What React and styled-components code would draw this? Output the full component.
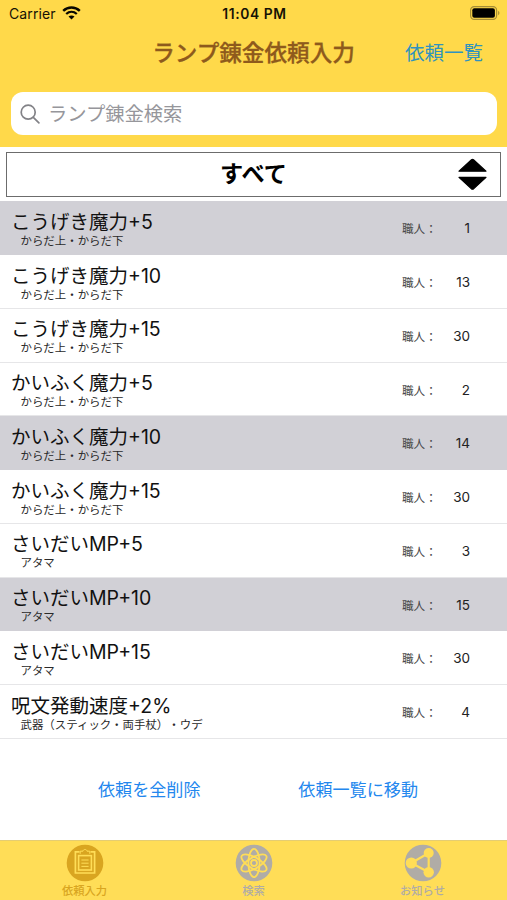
import React, { useState } from "react";
import styled, { createGlobalStyle } from "styled-components";

const GlobalStyle = createGlobalStyle`
  body {
    margin: 0;
    background: #fff;
    font-family: Inter, "Noto Sans CJK JP", sans-serif;
    color: #111;
    text-spacing-trim: space-all;
  }

  * {
    box-sizing: border-box;
  }
`;

const Screen = styled.div`
  width: 507px;
  height: 900px;
  display: flex;
  flex-direction: column;
  overflow: hidden;
  background: #fff;
`;

//Header
const Header = styled.header`
  height: 147px;
  flex: none;
  background: #ffd94a;
`;

const StatusBar = styled.div`
  height: 27px;
  padding: 0 7px 0 9px;
  display: grid;
  grid-template-columns: 1fr auto 1fr;
  align-items: center;
  font-size: 14px;
  line-height: 27px;
  color: #151205;
`;

const Carrier = styled.div`
  display: flex;
  align-items: center;
  gap: 6px;
  letter-spacing: 0.1px;

  svg {
    margin-top: -2px;
  }
`;

const Clock = styled.div`
  padding-top: 1px;
  font-size: 13.8px;
  line-height: 26px;
  font-weight: 600;
  letter-spacing: 0.6px;
`;

const BatteryWrapper = styled.div`
  display: flex;
  justify-content: flex-end;

  svg {
    margin-top: -2px;
  }
`;

const NavBar = styled.div`
  height: 52px;
  padding: 0 24px;
  display: grid;
  grid-template-columns: 1fr auto 1fr;
  align-items: center;
`;

const Title = styled.h1`
  grid-column: 2;
  margin: 0;
  color: #8e5a1c;
  font-size: 22.6px;
  line-height: 30px;
  font-weight: 500;
  -webkit-text-stroke: 0.3px #8e5a1c;
`;

const NavLink = styled.button`
  padding: 0;
  border: none;
  background: none;
  color: #2f93bf;
  font-family: inherit;
  font-size: 19.5px;
  line-height: 30px;
  text-align: right;
`;

const SearchBox = styled.label`
  height: 43px;
  margin: 13px 10px 0 11px;
  padding: 0 9px;
  display: flex;
  align-items: center;
  gap: 8px;
  border-radius: 12px;
  background: #fff;
`;

const SearchInput = styled.input`
  flex: 1;
  height: 30px;
  padding: 0;
  border: none;
  outline: none;
  font-family: inherit;
  font-size: 19.3px;

  &::placeholder {
    color: #96969b;
  }
`;

//Filter
const Filter = styled.button`
  height: 45px;
  flex: none;
  margin: 5px 6px 4.4px;
  padding: 0 13px;
  display: grid;
  grid-template-columns: 1fr auto 1fr;
  align-items: center;
  border: 1px solid #6c6c6c;
  background: #fff;
  color: #000;
  font-family: inherit;
  font-size: 23.2px;
  line-height: 32px;
  font-weight: 700;

  span {
    grid-column: 2;
    padding-bottom: 1px;
  }

  svg {
    justify-self: end;
  }
`;

//List
const List = styled.ul`
  margin: 0;
  padding: 0;
  flex: none;
  list-style: none;
`;

const Row = styled.li`
  height: 53.75px;
  padding: 1px 37px 0 11px;
  display: flex;
  align-items: center;
  border-bottom: 1px solid ${(p) => (p.$selected ? "#d1d0d6" : "#e6e6e8")};
  background: ${(p) => (p.$selected ? "#d1d0d6" : "#fff")};
`;

const RowText = styled.div`
  flex: 1;
  padding-top: 2px;
`;

const RowTitle = styled.div`
  font-size: 19.5px;
  line-height: 24px;
  white-space: nowrap;
`;

const RowParts = styled.div`
  padding-left: 9.5px;
  font-size: 11.45px;
  line-height: 15px;
  color: #2a2a2a;
`;

const Label = styled.div`
  width: 44px;
  font-size: 11.6px;
  color: #484848;
`;

const Count = styled.div`
  width: 24px;
  font-size: 13.5px;
  text-align: right;
  color: #222;
`;

//Footer
const Actions = styled.div`
  flex: 1;
  padding: 2px 89px 0 98px;
  display: flex;
  align-items: center;
  justify-content: space-between;
`;

const ActionBtn = styled.button`
  padding: 0;
  border: none;
  background: none;
  color: #2387ee;
  font-family: inherit;
  font-size: 17.1px;
  line-height: 26px;
`;

const TabBar = styled.nav`
  height: 60px;
  flex: none;
  display: grid;
  grid-template-columns: repeat(3, 1fr);
  border-top: 1px solid #e5cd72;
  background: #ffdd57;
`;

const Tab = styled.button`
  padding: 3px 0 0;
  display: flex;
  flex-direction: column;
  align-items: center;
  gap: 1px;
  border: none;
  background: none;
  color: ${(p) => (p.$active ? "#d9a520" : "#b0aca6")};
  font-family: inherit;
  font-size: 11.3px;
  line-height: 17px;
  font-weight: 500;
`;

const TAB_BG = "#ffdd57";

const WifiIcon = () => (
  <svg width="19" height="14" viewBox="0 0 19 14" fill="none" stroke="#080700">
    <path d="M1.2 4.8C6 .4 13 .4 17.8 4.8" strokeWidth="2.5" />
    <path d="M4.2 8C7.3 5.2 11.7 5.2 14.8 8" strokeWidth="2.3" />
    <path d="M6.5 10.5C8.2 9 10.8 9 12.5 10.5L9.5 13.5Z" fill="#080700" stroke="none" />
  </svg>
);

const BatteryIcon = () => (
  <svg width="30" height="14" viewBox="0 0 30 14">
    <rect x=".6" y=".6" width="26" height="12.8" rx="3.6" fill="none" stroke="#a58d35" strokeWidth="1.2" />
    <rect x="2.3" y="2.3" width="22.6" height="9.4" rx="2" fill="#000" />
    <path d="M28.1 4.8c1.8.8 1.8 3.6 0 4.4z" fill="#a58d35" />
  </svg>
);

const SearchIcon = () => (
  <svg width="20" height="20" viewBox="0 0 20 20" fill="none" stroke="#828287" strokeWidth="1.7" strokeLinecap="round">
    <circle cx="8.2" cy="8.2" r="7" />
    <path d="M13.3 13.3L18.9 18.8" />
  </svg>
);

const SortIcon = () => (
  <svg width="29" height="33" viewBox="0 0 29 33" stroke="#000" strokeWidth="1.2" strokeLinejoin="round">
    <path d="M1 13.2L13.5 1.7Q14.5 1 15.5 1.7L28 13.2Z" />
    <path d="M1 19.4L13.5 30.9Q14.5 31.6 15.5 30.9L28 19.4Z" />
  </svg>
);

const ClipboardIcon = () => (
  <svg width="38" height="38" viewBox="0 0 38 38">
    <circle cx="19" cy="19" r="18.3" fill="currentColor" />
    <g fill="none" stroke={TAB_BG}>
      <path d="M13.5 7.9H9.4V29H28.6V7.9H24.5" strokeWidth="1.7" />
      <path d="M14.2 9.8V7.2H17C17 5 21 5 21 7.2H23.8V9.8" strokeWidth="1" />
      <rect x="12.6" y="11.6" width="12.8" height="14.4" strokeWidth="1.6" />
      <path d="M15.4 16H22.6M15.4 19.2H22.6M15.4 22.4H22.6" strokeWidth="1" />
    </g>
  </svg>
);

const AtomIcon = () => (
  <svg width="38" height="38" viewBox="0 0 38 38">
    <circle cx="19" cy="19" r="18.3" fill="currentColor" />
    <g fill="none" stroke={TAB_BG} strokeWidth="1.8">
      <ellipse cx="19" cy="19" rx="5.6" ry="14.2" />
      <ellipse cx="19" cy="19" rx="5.6" ry="14.2" transform="rotate(60 19 19)" />
      <ellipse cx="19" cy="19" rx="5.6" ry="14.2" transform="rotate(120 19 19)" />
      <circle cx="19" cy="19" r="3" fill="currentColor" />
    </g>
  </svg>
);

const ShareIcon = () => (
  <svg width="38" height="38" viewBox="0 0 38 38">
    <circle cx="19" cy="19" r="18.3" fill="currentColor" />
    <path d="M24.7 9L7.3 19L24.7 28.3" fill="none" stroke={TAB_BG} strokeWidth="2.2" />
    <path d="M24.7 9V28.3" stroke={TAB_BG} strokeWidth="2.2" />
    <g fill={TAB_BG}>
      <circle cx="24.7" cy="9" r="5" />
      <circle cx="7.3" cy="19" r="5.6" />
      <circle cx="24.7" cy="28.3" r="5.2" />
    </g>
  </svg>
);

const items = [
  { name: "こうげき魔力+5", parts: "からだ上・からだ下", level: 1 },
  { name: "こうげき魔力+10", parts: "からだ上・からだ下", level: 13 },
  { name: "こうげき魔力+15", parts: "からだ上・からだ下", level: 30 },
  { name: "かいふく魔力+5", parts: "からだ上・からだ下", level: 2 },
  { name: "かいふく魔力+10", parts: "からだ上・からだ下", level: 14 },
  { name: "かいふく魔力+15", parts: "からだ上・からだ下", level: 30 },
  { name: "さいだいMP+5", parts: "アタマ", level: 3 },
  { name: "さいだいMP+10", parts: "アタマ", level: 15 },
  { name: "さいだいMP+15", parts: "アタマ", level: 30 },
  { name: "呪文発動速度+2%", parts: "武器（スティック・両手杖）・ウデ", level: 4 },
];

const tabs = [
  { label: "依頼入力", Icon: ClipboardIcon },
  { label: "検索", Icon: AtomIcon },
  { label: "お知らせ", Icon: ShareIcon },
];

const App = () => {
  const [selected, setSelected] = useState([0, 4, 7]);
  const [tab, setTab] = useState(0);

  const toggle = (index) => {
    setSelected((prev) =>
      prev.includes(index) ? prev.filter((i) => i !== index) : [...prev, index]
    );
  };

  return (
    <>
      <GlobalStyle />
      <Screen>
        <Header>
          <StatusBar>
            <Carrier>
              Carrier
              <WifiIcon />
            </Carrier>
            <Clock>11:04 PM</Clock>
            <BatteryWrapper>
              <BatteryIcon />
            </BatteryWrapper>
          </StatusBar>
          <NavBar>
            <Title>ランプ錬金依頼入力</Title>
            <NavLink>依頼一覧</NavLink>
          </NavBar>
          <SearchBox>
            <SearchIcon />
            <SearchInput placeholder="ランプ錬金検索" />
          </SearchBox>
        </Header>
        <Filter>
          <span>すべて</span>
          <SortIcon />
        </Filter>
        <List>
          {items.map((item, index) => (
            <Row
              key={item.name}
              $selected={selected.includes(index)}
              onClick={() => toggle(index)}
            >
              <RowText>
                <RowTitle>{item.name}</RowTitle>
                <RowParts>{item.parts}</RowParts>
              </RowText>
              <Label>職人：</Label>
              <Count>{item.level}</Count>
            </Row>
          ))}
        </List>
        <Actions>
          <ActionBtn onClick={() => setSelected([])}>依頼を全削除</ActionBtn>
          <ActionBtn>依頼一覧に移動</ActionBtn>
        </Actions>
        <TabBar>
          {tabs.map(({ label, Icon }, index) => (
            <Tab key={label} $active={tab === index} onClick={() => setTab(index)}>
              <Icon />
              {label}
            </Tab>
          ))}
        </TabBar>
      </Screen>
    </>
  );
};

export default App;
